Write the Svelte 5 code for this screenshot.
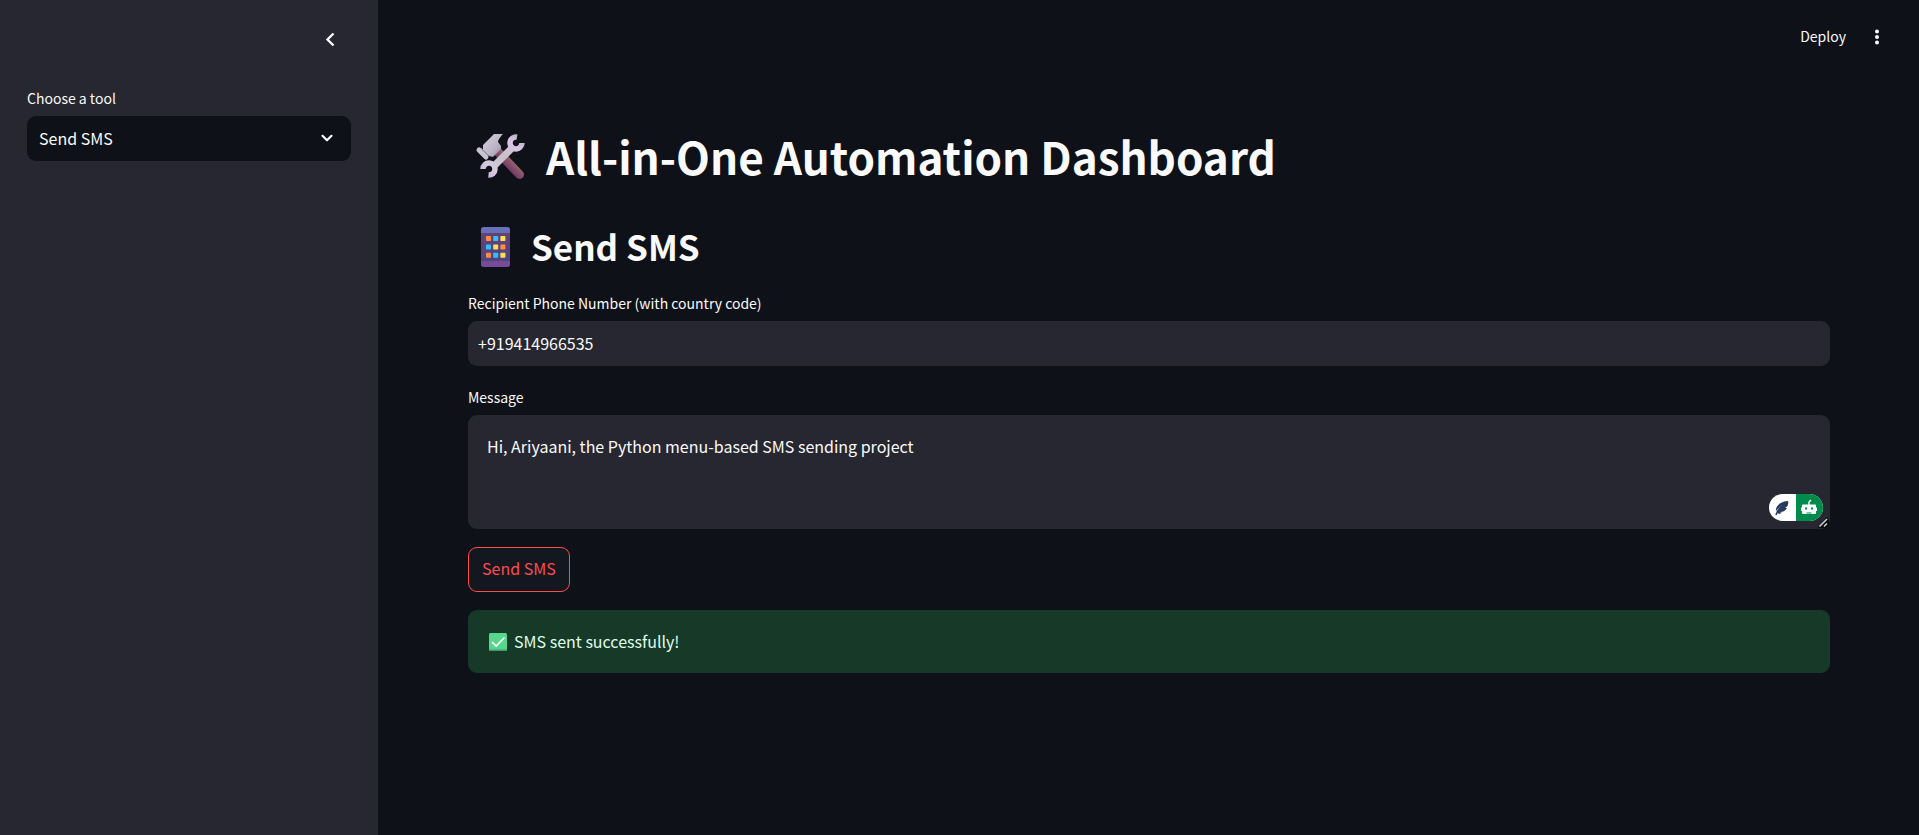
<script>
  let tool = $state('Send SMS');
  let phone = $state('+919414966535');
  let message = $state('Hi, Ariyaani, the Python menu-based SMS sending project');
  const keys = ['#ff8f3e', '#32bfff', '#ffe14f', '#32bfff', '#ffe14f', '#ff8f3e', '#ff8f3e', '#32bfff', '#ffe14f'];
</script>

<div class="app">
  <aside>
    <div class="sidebar-head">
      <button class="icon-button" aria-label="Collapse sidebar">
        <svg width="24" height="24" viewBox="0 0 24 24"><path d="M15.5 6.5 9.5 12.5 15.5 18.5" fill="none" stroke="#fafafa" stroke-width="2.4" /></svg>
      </button>
    </div>
    <div class="field">
      <label for="tool">Choose a tool</label>
      <div class="select">
        <select id="tool" bind:value={tool}>
          <option>Send SMS</option>
        </select>
        <svg class="chevron" width="24" height="24" viewBox="0 0 24 24"><path d="M7.5 9.8 12 14.3 16.5 9.8" fill="none" stroke="#fafafa" stroke-width="2.2" stroke-linecap="round" stroke-linejoin="round" /></svg>
      </div>
    </div>
  </aside>

  <div class="page">
    <header>
      <button class="deploy">Deploy</button>
      <button class="icon-button" aria-label="Main menu">
        <svg width="24" height="24" viewBox="0 0 24 24" fill="#fafafa"><circle cx="12" cy="6.500" r="2" /><circle cx="12" cy="12" r="2" /><circle cx="12" cy="17.500" r="2" /></svg>
      </button>
    </header>

    <main>
      <h1>
        <svg width="50" height="50" viewBox="-1 -2 50 50" aria-hidden="true">
          <defs>
            <linearGradient id="wood" gradientUnits="userSpaceOnUse" x1="37" y1="28" x2="30" y2="35">
              <stop offset="0" stop-color="#96656a" /><stop offset="1" stop-color="#6f3667" />
            </linearGradient>
            <linearGradient id="head" x1="0" y1="0" x2="1" y2="1">
              <stop offset="0" stop-color="#d6cfdf" /><stop offset=".6" stop-color="#bbb4c6" /><stop offset="1" stop-color="#8e8799" />
            </linearGradient>
            <linearGradient id="steel" gradientUnits="userSpaceOnUse" x1="46" y1="4" x2="10" y2="44">
              <stop offset="0" stop-color="#b7afbd" /><stop offset=".2" stop-color="#d6c5e4" /><stop offset=".5" stop-color="#c5c0ca" /><stop offset=".8" stop-color="#d5cbdd" /><stop offset="1" stop-color="#cbb3df" />
            </linearGradient>
          </defs>
          <path d="M20 17 43.500 41.500" stroke="url(#wood)" stroke-width="9" stroke-linecap="round" />
          <path d="M18 1H27C25 3 22 7 22 9L25 13V16L17 24 13 23 7 17V12Z" fill="url(#head)" />
          <path d="M3 17 10 24" stroke="#c9c3d2" stroke-width="5" stroke-linecap="round" />
          <path d="M5 15 12 22" stroke="#8d8799" stroke-width="1" stroke-linecap="round" />
          <g fill="none" stroke="url(#steel)">
            <path d="M36 15 17 34" stroke-width="7" />
            <path d="M41 4A6 6 0 1 0 46 10" stroke-width="5.500" />
            <path d="M7 36A6 6 0 1 1 12.500 42" stroke-width="5.500" />
          </g>
        </svg>
        All-in-One Automation Dashboard
      </h1>

      <h2>
        <svg width="30" height="42" viewBox="0 -1 30 42" aria-hidden="true">
          <defs>
            <linearGradient id="phone" x1="0" y1="0" x2="0" y2="1">
              <stop offset="0" stop-color="#694071" /><stop offset="1" stop-color="#4c4587" />
            </linearGradient>
          </defs>
          <rect x="0" y="1" width="29" height="40" rx="3" fill="url(#phone)" />
          <path d="M0 7V4A3 3 0 0 1 3 1H26A3 3 0 0 1 29 4V7Z" fill="#6571b9" />
          <path d="M0 35H29V38A3 3 0 0 1 26 41H3A3 3 0 0 1 0 38Z" fill="#764b98" />
          {#each keys as color, i}
            <rect x={5 + (i % 3) * 7.2} y={10 + Math.floor(i / 3) * 8.4} width="5" height="5" rx=".7" fill={color} />
          {/each}
        </svg>
        Send SMS
      </h2>

      <div class="field">
        <label for="phone-number">Recipient Phone Number (with country code)</label>
        <input id="phone-number" type="text" bind:value={phone} />
      </div>

      <div class="field">
        <label for="message">Message</label>
        <div class="message">
          <textarea id="message" bind:value={message} spellcheck="false"></textarea>
          <div class="assist">
            <button aria-label="Writing suggestions">
              <svg width="16" height="16" viewBox="0 0 16 16"><path d="M1 15C2 11 5 7 10 4" fill="none" stroke="#293b60" stroke-width="1.5" /><path d="M1 11C0 6 6 1 13 1C14 5 12 7 10 8L12 8C10 11 8 12 5 12L7 13C5 14 3 14 2 13C3 10 6 7 10 4C6 6 3 8 1 11Z" fill="#293b60" /></svg>
            </button>
            <button class="robot" aria-label="Generate text">
              <svg width="18" height="18" viewBox="0 0 18 18"><path d="M8 6V3L10 1" fill="none" stroke="#fff" stroke-width="1.400" /><rect x="1" y="5.500" width="14" height="9.500" rx="1" fill="#fff" /><path d="M.5 8.500V12M15.500 8.500V12" stroke="#fff" stroke-width="1" /><rect x="4" y="8.500" width="2" height="2" fill="#008a4b" /><rect x="10" y="8.500" width="2" height="2" fill="#008a4b" /><path d="M5.500 14H10.500" stroke="#008a4b" stroke-width="1" /></svg>
            </button>
          </div>
          <svg class="grip" width="11" height="11" viewBox="0 0 11 11" aria-hidden="true"><path d="M0 10 9 0 11 4V8L8 11H1Z" fill="#090b10" /><path d="M1.500 9.500 9 2M6 9.500 9 6.500" stroke="#d4d4d6" stroke-width="1.500" /></svg>
        </div>
      </div>

      <button class="send">Send SMS</button>

      <div class="alert" role="status">
        <svg width="18" height="18" viewBox="0 0 18 18" aria-hidden="true"><rect width="18" height="18" rx="1.500" fill="#58d68c" /><path d="M0 16.500H18V17A1 1 0 0 1 17 18H1Q0 18 0 17Z" fill="#3d9d70" /><path d="M3.500 9.500 7.200 13 15 5" fill="none" stroke="#fff" stroke-width="1.700" stroke-linecap="round" /></svg>
        SMS sent successfully!
      </div>
    </main>
  </div>
</div>

<style>
  :global(body) {
    margin: 0;
    background: #0e1117;
  }
  .app {
    display: flex;
    min-height: 100vh;
    color: #fafafa;
    background: #0e1117;
    font: 400 16px/27px "Noto Sans CJK SC", "Noto Sans", sans-serif;
  }
  .app * {
    box-sizing: border-box;
  }
  button, input, select, textarea {
    font: inherit;
    color: inherit;
    margin: 0;
    border: 0;
  }
  button {
    padding: 0;
    background: none;
    cursor: pointer;
  }
  svg {
    display: block;
    flex: none;
  }
  aside {
    flex: none;
    width: 378px;
    padding: 27px;
    background: #262730;
  }
  .sidebar-head {
    display: flex;
    justify-content: flex-end;
    height: 58px;
    padding-right: 9px;
  }
  .icon-button {
    width: 24px;
    height: 24px;
  }
  .field {
    display: flex;
    flex-direction: column;
    gap: 4px;
  }
  label {
    font-size: 14px;
  }
  .select {
    position: relative;
  }
  select, input {
    display: block;
    width: 100%;
    height: 45px;
    padding: 0 10px 2px;
    border-radius: 9px;
    background: #262730;
    appearance: none;
  }
  select {
    padding: 0 12px;
    background: #0e1117;
  }
  .chevron {
    position: absolute;
    top: 10px;
    right: 12px;
    pointer-events: none;
  }
  .page {
    flex: 1;
    min-width: 0;
  }
  header {
    display: flex;
    align-items: center;
    justify-content: flex-end;
    gap: 19px;
    height: 74px;
    padding: 0 30px;
  }
  .deploy {
    padding-bottom: 2px;
    font-size: 14px;
  }
  main {
    display: flex;
    flex-direction: column;
    gap: 18px;
    padding: 54px 89px 90px 90px;
  }
  h1, h2 {
    display: flex;
    align-items: center;
    margin: 0;
  }
  h1 {
    gap: 21px;
    padding: 0 7px 22px;
    font-size: 44px;
    line-height: 56px;
    font-weight: 700;
  }
  h2 {
    gap: 20px;
    padding: 0 13px 4px;
    font-size: 35px;
    line-height: 44px;
    font-weight: 600;
  }
  .message {
    position: relative;
  }
  textarea {
    display: block;
    width: 100%;
    height: 114px;
    padding: 18px 19px;
    border-radius: 9px;
    background: #262730;
    resize: vertical;
  }
  textarea::-webkit-resizer {
    background: transparent;
  }
  .grip {
    position: absolute;
    right: 1px;
    bottom: 1px;
    pointer-events: none;
  }
  .assist {
    position: absolute;
    right: 7px;
    bottom: 8px;
    display: flex;
    border-radius: 14px;
    overflow: hidden;
    background: #fff;
  }
  .assist button {
    display: grid;
    place-items: center;
    width: 27px;
    height: 27px;
  }
  .assist .robot {
    background: #008a4b;
  }
  .send {
    align-self: flex-start;
    height: 45px;
    padding: 0 13px 2px;
    border: 1px solid #ff4b4b;
    border-radius: 9px;
    background: #131720;
    color: #ff4b4b;
  }
  .alert {
    display: flex;
    align-items: center;
    gap: 7px;
    padding: 18px 21px;
    border-radius: 9px;
    background: #173928;
    color: #dffde9;
  }
</style>
